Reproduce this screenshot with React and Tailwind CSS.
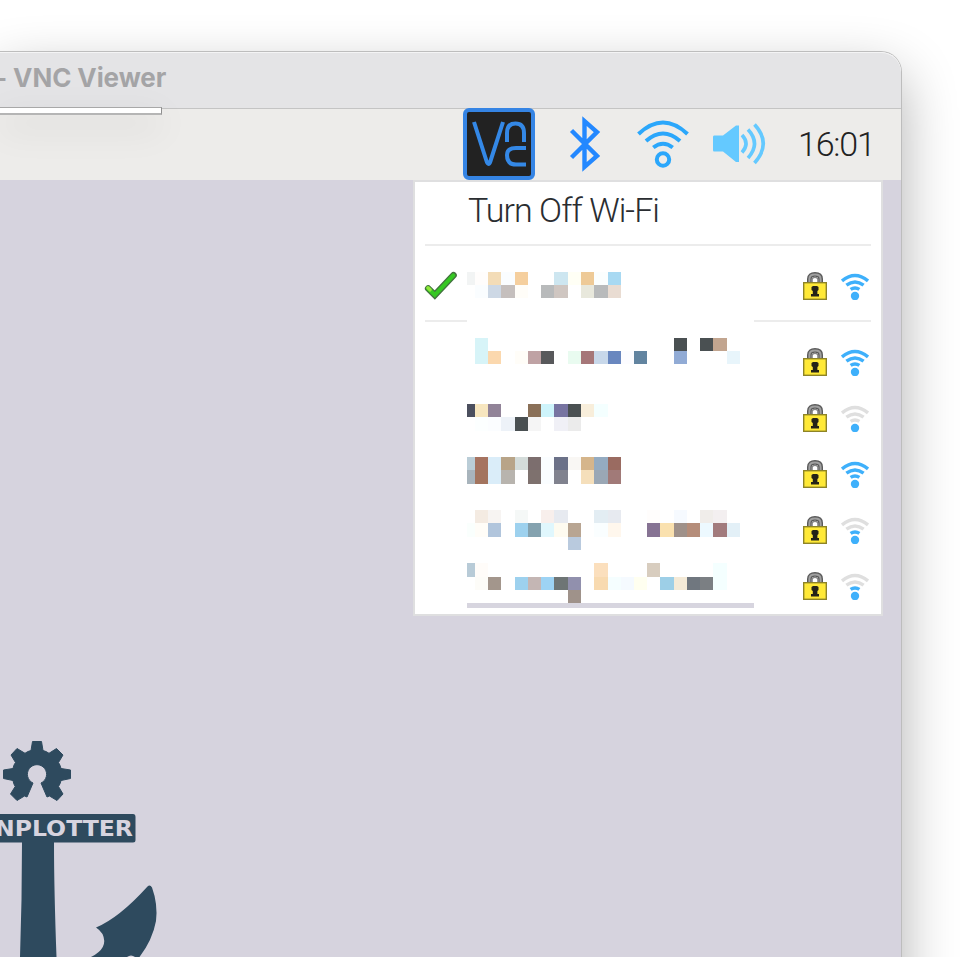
const COLUMNS =
  'grid grid-cols-[8px_13px_13px_14px_13px_13px_13px_14px_13px_13px_14px_13px_13px_13px_13px_14px_13px_13px_13px_14px_13px]';

const _ = 'transparent';

const networks = [
  {
    pad: 'pt-[14px]',
    rows: 'grid-rows-[13px_13px]',
    level: 3,
    connected: true,
    cells: [
      ['#f2f4f4', '#fffdfc', '#f3dcb7', '#fafdff', '#f5cf9e', _, _, '#cde6f0', '#fffff5', '#eeca97', '#fbfefe', '#a8d9f2'],
      [_, '#fafdff', '#cdd8e5', '#c5bfbd', '#fffdf8', _, '#b8babb', '#cfc6c1', _, '#e8e8dc', '#b8babb', '#e9dcd2'],
    ],
  },
  {
    pad: 'pt-[4px]',
    rows: 'grid-rows-[13px_13px]',
    level: 3,
    cells: [
      [_, '#d7f4f8', _, _, _, _, _, _, _, _, _, _, _, _, _, _, '#4a5052', _, '#4a5052', '#c2a58f'],
      [_, '#d7f4f8', '#fbd8ae', _, '#fffdf8', '#bfa2a4', '#58595b', _, '#e9fbf0', '#a67779', '#c8d8ea', '#6987bf', '#fcfcff', '#6284a0', _, _, '#91abd5', _, _, _, '#e8f5fb'],
    ],
  },
  {
    pad: 'pt-[14px]',
    rows: 'grid-rows-[13px_14px]',
    level: 1,
    cells: [
      ['#4b4f5e', '#f7e6bf', '#918398', _, _, '#8a7058', '#cef4fb', '#7774a1', '#4a5052', '#f8eedb', '#f4ffff'],
      [_, '#fcffff', '#fbfdff', '#edf2f8', '#4a5052', '#f5f5f5', _, '#f0f0f6', '#ebebeb'],
    ],
  },
  {
    pad: 'pt-[11px]',
    rows: 'grid-rows-[13px_14px]',
    level: 3,
    cells: [
      ['#bacdd7', '#a67360', '#daedf9', '#b8a488', '#d4dcda', '#7c6e6e', '#fafdff', '#6b7188', '#f9f7f4', '#d5b58b', '#94abc1', '#9a6b61'],
      ['#a8b4bc', '#a3745e', '#daedf9', '#b8b4ae', _, '#7e716e', '#fafdff', '#80828e', _, '#f5dfbb', '#9aa7b5', '#a17a78'],
    ],
  },
  {
    pad: 'pt-[8px]',
    rows: 'grid-rows-[13px_14px_13px]',
    level: 2,
    cells: [
      [_, '#f4ebe2', '#f7f4f2', _, '#f5f8f7', _, '#f8efec', '#e7eaf0', _, _, '#e3edf3', '#e7eaf0', _, _, '#fffdfc', _, '#f6faff', _, '#f0edea', '#f3eff0'],
      ['#fafffd', '#fffdf8', '#b1c5dc', _, '#9dd1ee', '#84a2af', '#e0f7fd', '#fefbf0', '#b8a592', _, '#fafeff', '#fff7ed', _, _, '#867393', '#fae1af', '#9f918a', '#b58d7a', '#edf9ff', '#a27b7d', '#e3f0f7'],
      [_, _, _, _, _, _, _, _, '#b9cade'],
    ],
  },
  {
    pad: 'pt-[5px]',
    rows: 'grid-rows-[14px_13px_13px]',
    level: 2,
    strip: true,
    cells: [
      ['#b8cbd7', '#fffcf9', _, _, _, _, _, _, _, _, '#fbdfbd', _, _, _, '#d8cdbf', _, _, _, _, '#f4ffff'],
      [_, '#fdfcf8', '#a3968c', _, '#9dd1ee', '#c4b6b4', '#9dd3f4', '#6e7575', '#9190ad', _, '#f8dab0', '#f5feff', '#f5faff', '#fffff0', _, '#9dcfe7', '#f4ead7', '#70777f', '#7b7f83', '#f4ffff'],
      [_, _, _, _, _, _, _, _, '#9f928a'],
    ],
  },
];

function Mosaic({ cells, rows }) {
  return (
    <div className={`${COLUMNS} ${rows}`}>
      {cells.flatMap((row, r) =>
        Array.from({ length: 21 }, (_unused, c) => (
          <span key={`${r}-${c}`} style={{ backgroundColor: row[c] ?? _ }} />
        )),
      )}
    </div>
  );
}

function Check() {
  return (
    <svg width="34" height="30" viewBox="0 0 34 30" fill="none" className="-ml-px">
      <path d="M4.2 17.5 L10.8 24 L29.5 4.2" stroke="#43733f" strokeWidth="6.6" strokeLinecap="round" strokeLinejoin="miter" />
      <path d="M4.2 17.5 L10.8 24 L29.3 4.4" stroke="#35c822" strokeWidth="4" strokeLinecap="round" />
      <path d="M4 16.8 L6 18.8" stroke="#8fe83a" strokeWidth="3.6" strokeLinecap="round" />
    </svg>
  );
}

function Lock() {
  return (
    <svg width="24" height="28" viewBox="0 0 24 28" fill="none">
      <path d="M6.4 11 V7 Q6.4 2.4 12 2.4 Q17.6 2.4 17.6 7 V11" stroke="#5a5a5a" strokeWidth="4.8" />
      <path d="M6.4 11 V7 Q6.4 2.6 12 2.6 Q17.6 2.6 17.6 7 V11" stroke="#a0a0a0" strokeWidth="2" />
      <path d="M9.2 11 V7.5 Q9.2 5.4 12 5.4 Q14.8 5.4 14.8 7.5 V11" stroke="#858585" strokeWidth="1.2" />
      <rect x=".7" y="10.7" width="22.6" height="16.6" fill="#ffe937" stroke="#8e8427" strokeWidth="1.4" />
      <path d="M10 14 H14 L15.5 15 V18 L14.4 19 V22 H16 V24.5 H8 V22 H9.8 V19 L8.5 18 V15 Z" fill="#242318" />
    </svg>
  );
}

function Signal({ level }) {
  const on = '#3eb0fb';
  const off = '#dfdfdf';
  return (
    <svg width="28" height="28" viewBox="0 0 28 28" fill="none" strokeWidth="3.4">
      <path d="M1 9 Q14 -1.8 27 9" stroke={level >= 3 ? on : off} />
      <path d="M5.4 13.2 Q14 6.6 22.6 13.2" stroke={level >= 3 ? on : off} />
      <path d="M9.6 17.4 Q14 14.4 18.4 17.4" stroke={level >= 2 ? on : off} />
      <circle cx="14" cy="24" r="4.2" fill={on} />
    </svg>
  );
}

function Network({ net }) {
  return (
    <li className="flex h-14 pl-[10px]">
      <div className="flex w-[42px] shrink-0 items-center">{net.connected && <Check />}</div>
      <div className={`w-[287px] shrink-0 ${net.pad}`}>
        <Mosaic cells={net.cells} rows={net.rows} />
        {net.strip && <div className="h-[5px] bg-[#d7d5df]" />}
      </div>
      <div className="ml-[49px] flex items-center gap-[14px]">
        <Lock />
        <Signal level={net.level} />
      </div>
    </li>
  );
}

function WifiMenu() {
  return (
    <div className="absolute left-[413px] top-[72px] h-[436px] w-[470px] border-2 border-[#dfdfe0] bg-white font-[Roboto,sans-serif]">
      <div className="flex h-[62px] items-start whitespace-nowrap pl-[53px] pt-1.5 text-[34px] font-light leading-[44px] tracking-[-0.95px] text-[#2a2d31]">
        Turn Off Wi-Fi
      </div>
      <div className="mx-[10px] h-[2px] bg-[#ececec]" />
      <ul className="pt-3">
        <Network net={networks[0]} />
      </ul>
      <div className="mx-[10px] mt-[6px] flex h-[2px] justify-between">
        <div className="w-[42px] bg-[#ececec]" />
        <div className="w-[117px] bg-[#ececec]" />
      </div>
      <ul className="pt-3">
        {networks.slice(1).map((net, i) => (
          <Network key={i} net={net} />
        ))}
      </ul>
    </div>
  );
}

function VncIcon() {
  return (
    <svg width="72" height="72" viewBox="0 0 72 72" fill="none" className="shrink-0">
      <rect x="2" y="2" width="68" height="68" rx="4" fill="#222" stroke="#3584e4" strokeWidth="4" />
      <g stroke="#3488e6" strokeWidth="4">
        <path d="M11 14 L23.5 53 Q25.5 59 27.5 53 L40 14" />
        <path d="M44 34 V25 Q44 15.5 52.5 15.5 Q61 15.5 61 25 V34" />
        <path d="M63 40 H53 Q44 40 44 47 Q44 56.5 53 56.5 H63" />
      </g>
    </svg>
  );
}

function Bluetooth() {
  return (
    <svg width="32" height="56" viewBox="0 0 32 56" fill="none" className="shrink-0">
      <path d="M2.5 14.5 L28 40 L15.5 51 V5 L28 16 L2.5 41.5" stroke="#2388ff" strokeWidth="4.4" />
    </svg>
  );
}

function WifiTray() {
  return (
    <svg width="52" height="48" viewBox="0 0 52 48" fill="none" stroke="#2ba7fb" strokeWidth="4" className="shrink-0">
      <path d="M1.5 14 Q26 -9 50.5 14" />
      <path d="M9 21 Q26 6 43 21" />
      <path d="M16.3 27.5 Q26 20 35.7 27.5" />
      <circle cx="26" cy="39.5" r="6.2" />
    </svg>
  );
}

function Speaker() {
  return (
    <svg width="54" height="42" viewBox="0 0 54 42" fill="none" className="shrink-0">
      <path d="M2 12.5 H11 L24 2.5 H27 V39 H24 L11 28.5 H2 Q1 28.5 1 27 V14 Q1 12.5 2 12.5 Z" fill="#64c9ff" />
      <g stroke="#64c9ff" strokeWidth="3.6">
        <path d="M30 12 Q38 20.5 30 29.5" />
        <path d="M36 6.5 Q49 20.5 36 35" />
        <path d="M42.5 1.5 Q60 20.5 42.5 40" />
      </g>
    </svg>
  );
}

function Logo() {
  return (
    <svg width="170" height="220" viewBox="0 737 170 220" fill="#2e4a5e" className="block">
      <path
        d="M32.5 741.5 H41.5 L43 750.5 Q46 751.2 49 753.3 L56.5 748.5 L63 755 L58.5 762.5 Q60.2 765 61 768.5 L70.5 770 V778.5 L61 780.5 Q60.5 783.5 58.5 786.5 L63 794 L57 800.5 L49.5 796 L47 797 L41 783 A9.6 9.6 0 1 0 33 783 L27 797 L24.5 796 L17 800.5 L10.5 794 L15.2 786.5 Q13.5 784 13 780.5 L3.5 778.5 V770 L13 768.5 Q13.5 765 15.5 762.5 L11 755 L17 748.5 L25 753.3 Q27.5 751.3 31 750.5 Z"
        stroke="#2e4a5e"
        strokeWidth="1"
        strokeLinejoin="round"
      />
      <path d="M0 814 H133 Q135.5 814 135.5 817 V840 Q135.5 842.5 133 842.5 H54 Q54 890 56.5 957 H20 Q22 900 22 842.5 H0 Z" />
      <path d="M147.5 886.5 Q150 884 152 887.5 Q158 904 156 921 Q152.500 940 139.5 957 H135 Q131 954 127 957 H91 Q109 948 102.500 934 Q100 930 96 927.500 Q119 918 147.5 886.5 Z" />
      <text x="-5" y="836" fill="#d7d4df" fontFamily="DejaVu Sans, sans-serif" fontWeight="700" fontSize="22" textLength="138" lengthAdjust="spacingAndGlyphs">
        NPLOTTER
      </text>
    </svg>
  );
}

export default function App() {
  return (
    <div className="h-[957px] w-[969px] overflow-hidden bg-white pt-[52px]">
      <div className="relative h-[1040px] w-[901px] rounded-tr-[20px] shadow-[0_0_0_1px_#bdbdbd,0_22px_56px_rgba(0,0,0,0.32)]">
        <header className="flex h-14 items-start overflow-hidden rounded-tr-[20px] border-t border-[#f4f4f5] bg-[#e4e4e6] pt-[9px]">
          <h1 className="-ml-[5px] whitespace-nowrap font-[Inter,sans-serif] text-[26px] font-bold leading-8 tracking-[-0.1px] text-[#a4a4a6]">
            - VNC Viewer
          </h1>
        </header>
        <main className="relative h-[984px] bg-[#d6d3de]">
          <div className="flex h-[72px] items-center bg-[#edecea] pl-[463px] shadow-[inset_0_1px_0_#c4c4c4]">
            <VncIcon />
            <div className="ml-[34px] flex"><Bluetooth /></div>
            <div className="ml-9 flex"><WifiTray /></div>
            <div className="ml-[23px] flex"><Speaker /></div>
            <time className="ml-[32px] whitespace-nowrap font-[Roboto,sans-serif] text-[34px] font-light leading-10 tracking-[-1.2px] text-[#222]">16:01</time>
          </div>
          <div className="pt-[557px]">
            <Logo />
          </div>
          <div className="absolute -top-px left-0 h-[8px] w-[162px] border-b-2 border-r border-t border-b-[#b5b5b5] border-r-[#8e8e8e] border-t-[#a8a8a8] bg-white shadow-[0_12px_36px_rgba(0,0,0,0.14)]" />
          <WifiMenu />
        </main>
      </div>
    </div>
  );
}
